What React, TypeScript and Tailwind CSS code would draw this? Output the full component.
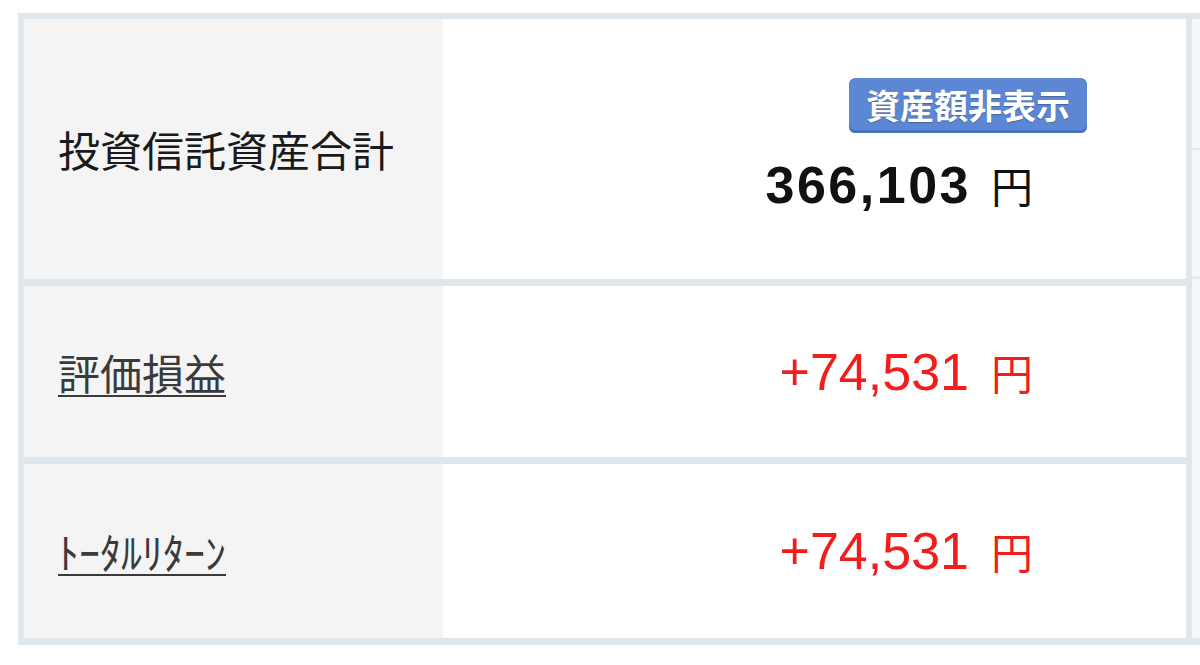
const jp = "font-['Noto_Sans_CJK_JP',sans-serif]";
const num = "font-['Liberation_Sans','Noto_Sans_CJK_JP',sans-serif]";

const rows = [
  { label: "評価損益", value: "+74,531", height: "h-[178px]" },
  { label: "ﾄｰﾀﾙﾘﾀｰﾝ", value: "+74,531", height: "h-[181px]" },
];

const App = () => {
  return (
    <div className="w-[1200px] h-[665px] overflow-hidden bg-white pt-[13px] pl-[18px]">
      <div className="flex w-[1260px] border-t-[6px] border-l-[6px] border-b-[7px] border-[#dfe6ec]">
        {/* main columns */}
        <div className="flex w-[1168px] flex-col border-r-[6px] border-[#dfe6ec]">
          {/* total */}
          <div className="flex h-[260px]">
            <div className="flex w-[419px] items-center bg-[#f4f4f4] pl-[34px]">
              <span className={`${jp} text-[42px] leading-none text-[#1a1a1a]`}>
                投資信託資産合計
              </span>
            </div>
            <div className="flex flex-1 flex-col items-end bg-white pt-[59px] pr-[99px]">
              <span
                className={`${jp} rounded-[6px] bg-[#5b87d4] px-[17px] pt-[7px] pb-[8px] text-[34px] font-bold leading-[40px] text-white shadow-[inset_0_-3px_0_#4a74c0] [text-shadow:0_1px_1px_rgba(0,0,0,0.25)]`}
              >
                資産額非表示
              </span>
              <div className="mt-[26px] flex items-baseline pr-[54px] text-[#111]">
                <span className={`${num} text-[52px] font-bold leading-none tracking-[2.5px]`}>
                  366,103
                </span>
                <span className={`${jp} ml-[20px] text-[42px] leading-none`}>円</span>
              </div>
            </div>
          </div>

          {rows.map((row) => (
            <div key={row.label} className={`flex ${row.height} border-t-[7px] border-[#dfe6ec]`}>
              <div className="flex w-[419px] items-center bg-[#f4f4f4] pl-[34px]">
                <span
                  className={`${jp} text-[42px] leading-none text-[#3a3a3a] underline decoration-2 underline-offset-[5px]`}
                >
                  {row.label}
                </span>
              </div>
              <div className="flex flex-1 items-center justify-end bg-white pr-[153px] text-[#f21d1d]">
                <div className="flex items-baseline">
                  <span className={`${num} text-[52px] leading-none`}>{row.value}</span>
                  <span className={`${jp} ml-[22px] text-[42px] leading-none`}>円</span>
                </div>
              </div>
            </div>
          ))}
        </div>

        {/* next column, cut off */}
        <div className="flex flex-1 flex-col bg-[#f7f8f9]">
          <div className="h-[131px] border-b-2 border-[#e3e8ec]" />
          <div className="h-[129px] border-b-[3px] border-[#e6ebef]" />
          <div className="flex-1" />
        </div>
      </div>
    </div>
  );
};

export default App;
